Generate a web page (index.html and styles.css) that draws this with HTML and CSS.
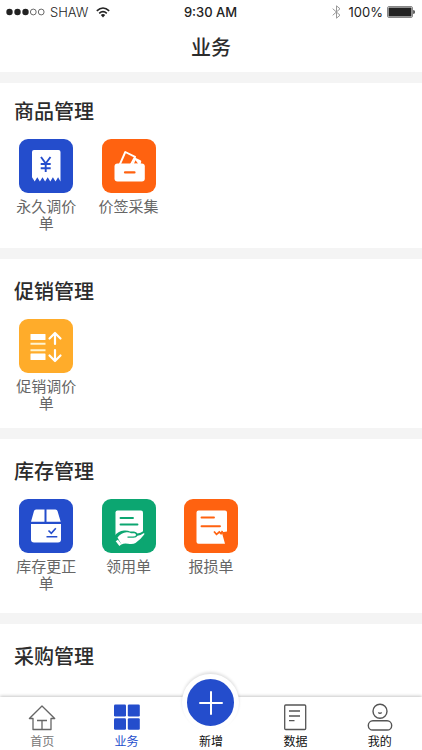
FILE: index.html
```html
<!DOCTYPE html>
<html lang="zh-CN">
<head>
<meta charset="utf-8">
<meta name="viewport" content="width=device-width, initial-scale=1">
<title>业务</title>
<link rel="stylesheet" href="styles.css">
</head>
<body>
<div class="app">
  <div class="status">
    <div class="status-side">
      <svg width="39" height="8" viewBox="0 0 39 8" aria-hidden="true">
        <g fill="#222"><circle cx="3.5" cy="4" r="3.2"/><circle cx="11.5" cy="4" r="3.2"/><circle cx="19.5" cy="4" r="3.2"/></g>
        <g fill="none" stroke="#444" stroke-width=".8"><circle cx="27.3" cy="4" r="2.9"/><circle cx="35.2" cy="4" r="2.9"/></g>
      </svg>
      <span class="carrier">SHAW</span>
      <svg width="14" height="11" viewBox="0 0 14 11" aria-hidden="true">
        <g fill="none" stroke="#222" stroke-width="1.6"><path d="M.8 3.8Q7-1.8 13.2 3.8M3.2 6.3Q7 2.9 10.8 6.3"/></g>
        <path fill="#222" d="M4.8 8Q7 6.2 9.2 8L7 10.5z"/>
      </svg>
    </div>
    <span class="time">9:30 AM</span>
    <div class="status-side status-end">
      <svg width="9" height="14" viewBox="0 0 9 14" fill="none" stroke="#999" aria-hidden="true"><path d="M.7 3.7 8 10.2 4.5 13.2V.8L8 3.8.7 10.3"/></svg>
      <span class="charge">100%</span>
      <svg width="28" height="12" viewBox="0 0 28 12" aria-hidden="true"><rect x=".5" y=".5" width="25" height="11" rx="1.5" fill="#fff" stroke="#888"/><rect x="1.5" y="1.5" width="23" height="9" rx=".6" fill="#222"/><path d="M26.2 4Q28 4 28 6T26.2 8z" fill="#444"/></svg>
    </div>
  </div>
  <header class="header"><h1>业务</h1></header>

  <main class="content">
    <section class="group group-first">
      <h2>商品管理</h2>
      <div class="grid">
        <a class="item" href="#price">
          <svg class="tile" viewBox="0 0 54 54" aria-hidden="true"><rect width="54" height="54" rx="9" fill="#244dcc"/><path fill="#fff" d="M13 13q0-2 2-2h24.500q2 0 2 2v29.500l-2.400-4.200-2.600 4.200-2.600-4.200-2.600 4.200-2.600-4.200-2.600 4.200-2.600-4.200-2.600 4.200-2.600-4.200-2.600 4.200-2.600-4.200L13 42.500z"/><path d="m22 18 4.700 6.500L31.500 18M26.700 24.500V33M21.700 25h10M21.700 29.200h10" fill="none" stroke="#244dcc" stroke-width="1.900"/></svg>
          <span class="label">永久调价单</span>
        </a>
        <a class="item" href="#tags">
          <svg class="tile" viewBox="0 0 54 54" aria-hidden="true"><rect width="54" height="54" rx="9" fill="#ff6210"/><path d="M17.800 25.500 23.300 13l9.800 4.800-4.300 8" fill="none" stroke="#fff" stroke-width="1.900" stroke-linejoin="round"/><path fill="#fff" d="m32.800 18.500 5.700 2.700q1 .5.700 1.600l-.7 2.700h-8.500z"/><path fill="#ff6210" d="m33.500 21.200 2.600 3.600h-4.200z"/><rect x="12.500" y="24.600" width="30.300" height="17.900" rx="3" fill="#fff"/><path d="M23 33.400h9.500" stroke="#ff6210" stroke-width="2.200" stroke-linecap="round"/></svg>
          <span class="label">价签采集</span>
        </a>
      </div>
    </section>

    <section class="group">
      <h2>促销管理</h2>
      <div class="grid">
        <a class="item" href="#promotion">
          <svg class="tile" viewBox="0 0 54 54" aria-hidden="true"><rect width="54" height="54" rx="9" fill="#ffac2a"/><g fill="#fff"><rect x="11.500" y="15" width="15" height="6" rx=".6"/><rect x="11.500" y="34.500" width="15" height="6.500" rx=".6"/></g><path d="M11.500 24.800h15M11.500 31.200h15" stroke="#fff4cf" stroke-width="2"/><path d="M36 25V14.500M30.500 19.500 36 14l5.500 5.500M36 31v10.500M30.500 36.500 36 42l5.500-5.500" fill="none" stroke="#fff" stroke-width="2.200" stroke-linecap="round" stroke-linejoin="round"/></svg>
          <span class="label">促销调价单</span>
        </a>
      </div>
    </section>

    <section class="group group-tall">
      <h2>库存管理</h2>
      <div class="grid">
        <a class="item" href="#stock">
          <svg class="tile" viewBox="0 0 54 54" aria-hidden="true"><rect width="54" height="54" rx="9" fill="#244dcc"/><g fill="#fff"><path d="M17 10.500h8.500v12.300H12L15 12q.4-1.500 2-1.500zM27.500 10.500h9q1.600 0 2 1.500l3.200 10.800H27.500z"/><path d="M12 25h30v15.500q0 3-3 3H15q-3 0-3-3z"/></g><path d="m29.500 31.500 2.800 2.800 4.500-5M27.500 37.800h10.800" fill="none" stroke="#244dcc" stroke-width="1.600"/></svg>
          <span class="label">库存更正单</span>
        </a>
        <a class="item" href="#requisition">
          <svg class="tile" viewBox="0 0 54 54" aria-hidden="true"><rect width="54" height="54" rx="9" fill="#0ca671"/><path fill="#fff" d="M13.500 13.500q0-2 2-2H39q2 0 2 2V35l-3.500 4H13.500z"/><path d="M18.500 19H31M18.500 25.500h17" stroke="#0ca671" stroke-width="1.900" stroke-linecap="round"/><path fill="#0ca671" d="M12 37.500q4-5.500 10-6 4-.3 6 1h4q2.500.3 3.500 2 3-.5 6-2.500v14H12z"/><path fill="#fff" d="M15.500 38.500q4-4.700 9-5.200 3-.2 4.500 1h3.500q1.800.3 1.500 2-.5 1.300-3 1.300h-5.500v1.200h6q3-.1 4-2 3-.6 6-2.600 1.500-.2.700 1.200-4.200 5.600-8.700 8.600-2.500 1.500-7.500.7-4-.8-6.500.8z"/><path d="m14.800 41.500 3.700 4.700" stroke="#fff" stroke-width="2.800"/></svg>
          <span class="label">领用单</span>
        </a>
        <a class="item" href="#damage">
          <svg class="tile" viewBox="0 0 54 54" aria-hidden="true"><rect width="54" height="54" rx="9" fill="#ff6210"/><path fill="#fff" d="M12.500 13.500q0-2 2-2H41q2 0 2 2V32.500l-5.200.8 3.200 11.400H14.500q-2 0-2-2z"/><path d="m30 32.500 2.500 2.800 2.800-2.300 1.700 1.600 1.500-2.600" fill="none" stroke="#ff6210" stroke-width="1.700"/><path d="M17.500 18.500H30M17.500 27.300H36" stroke="#ff6210" stroke-width="1.900" stroke-linecap="round"/></svg>
          <span class="label">报损单</span>
        </a>
      </div>
    </section>

    <section class="group">
      <h2>采购管理</h2>
    </section>
  </main>

  <nav class="tabs">
    <a class="tab tab-muted" href="#home">
      <svg class="tab-icon" viewBox="0 0 28 28" fill="none" stroke="#666" stroke-width="1.300" stroke-linejoin="round" aria-hidden="true"><path d="M5 15.500H1.400L14 3l12.700 12.500H23V26.500H5zM9 17.500h10M14 17.500v9"/></svg>
      <span>首页</span>
    </a>
    <a class="tab tab-active" href="#business" aria-current="page">
      <svg class="tab-icon" viewBox="0 0 28 28" fill="#244dcc" aria-hidden="true"><rect x="1" y="1.500" width="12" height="12" rx="1.300"/><rect x="14.800" y="1.500" width="12" height="12" rx="1.300"/><rect x="1" y="15.300" width="12" height="11.500" rx="1.300"/><rect x="14.800" y="15.300" width="12" height="11.500" rx="1.300"/></svg>
      <span>业务</span>
    </a>
    <a class="tab" href="#add">
      <span class="add"><svg width="24" height="24" viewBox="0 0 24 24" stroke="#fff" stroke-width="2" stroke-linecap="round" aria-hidden="true"><path d="M1 12h22M12 1v22"/></svg></span>
      <span>新增</span>
    </a>
    <a class="tab" href="#data">
      <svg class="tab-icon" viewBox="0 0 28 28" fill="none" stroke="#555" stroke-width="1.300" aria-hidden="true"><rect x="3.700" y="2" width="21" height="24.500" rx="1"/><path d="M8 8h11M8 13h11M8 17.700h5.500"/></svg>
      <span>数据</span>
    </a>
    <a class="tab" href="#me">
      <svg class="tab-icon" viewBox="0 0 28 28" fill="none" stroke="#555" stroke-width="1.400" aria-hidden="true"><circle cx="14" cy="8.300" r="7"/><path d="M12.300 9.500q1.700 1.400 3.400 0"/><rect x="2.300" y="17.800" width="23.400" height="9.200" rx="4.600"/></svg>
      <span>我的</span>
    </a>
  </nav>
</div>
</body>
</html>
```

FILE: styles.css
```css
* {
  box-sizing: border-box;
}

body {
  margin: 0;
  background: #fff;
  color: #2c2c2c;
  font-family: "Liberation Sans", "Noto Sans CJK SC", sans-serif;
}

a {
  color: inherit;
  text-decoration: none;
}

h1,
h2 {
  margin: 0;
  font-size: 20px;
  line-height: 28px;
  font-weight: 500;
}

svg {
  display: block;
  flex-shrink: 0;
}

.app {
  display: flex;
  flex-direction: column;
  height: 100vh;
}

.status {
  display: grid;
  grid-template-columns: 1fr auto 1fr;
  align-items: center;
  height: 24px;
  padding: 0 7px 0 6px;
  color: #222;
  font-family: Inter, sans-serif;
  font-size: 13px;
}

.status-side {
  display: flex;
  align-items: center;
  gap: 5px;
}

.status-end {
  justify-content: flex-end;
  gap: 4px;
}

.carrier {
  margin-right: 3px;
  font-weight: 300;
}

.time {
  font-weight: 500;
}

.charge {
  margin-left: 4px;
}

.header {
  padding: 10px 0;
  text-align: center;
}

.content {
  display: flex;
  flex: 1;
  flex-direction: column;
  min-height: 0;
  overflow-y: auto;
}

.group {
  flex-shrink: 0;
  padding: 19px 5px 16px;
  border-top: 11px solid #f4f4f4;
}

.group-first {
  padding-top: 15px;
}

.group-tall {
  padding-bottom: 21px;
}

.group h2 {
  padding-left: 9px;
}

.grid {
  display: grid;
  grid-template-columns: repeat(5, 1fr);
  margin-top: 13px;
}

.item {
  display: flex;
  flex-direction: column;
  align-items: center;
  gap: 5px;
}

.tile {
  width: 54px;
  height: 54px;
}

.label {
  width: 62px;
  color: #666;
  font-size: 15px;
  line-height: 17px;
  text-align: center;
}

.tabs {
  position: relative;
  display: grid;
  grid-template-rows: minmax(0, 1fr);
  grid-template-columns: repeat(5, 1fr);
  height: 53px;
  background: #fff;
  box-shadow: 0 -1px 3px rgba(0, 0, 0, 0.22);
}

/* The labels share the bottom line; a taller icon grows upwards. */
.tab {
  display: flex;
  flex-direction: column;
  align-items: center;
  justify-content: flex-end;
  gap: 4px;
  color: #111;
  font-size: 12px;
  line-height: 15px;
}

.tab-muted {
  color: #777;
}

.tab-active {
  color: #244dcc;
}

.tab-icon {
  width: 28px;
  height: 28px;
}

/* Raised action button that overlaps the top edge of the tab bar. */
.add {
  display: flex;
  flex-shrink: 0;
  align-items: center;
  justify-content: center;
  width: 57px;
  height: 57px;
  border: 5px solid #fff;
  border-radius: 50%;
  background: #244dcc;
  box-shadow: 0 -2px 3px rgba(0, 0, 0, 0.12);
}
```
